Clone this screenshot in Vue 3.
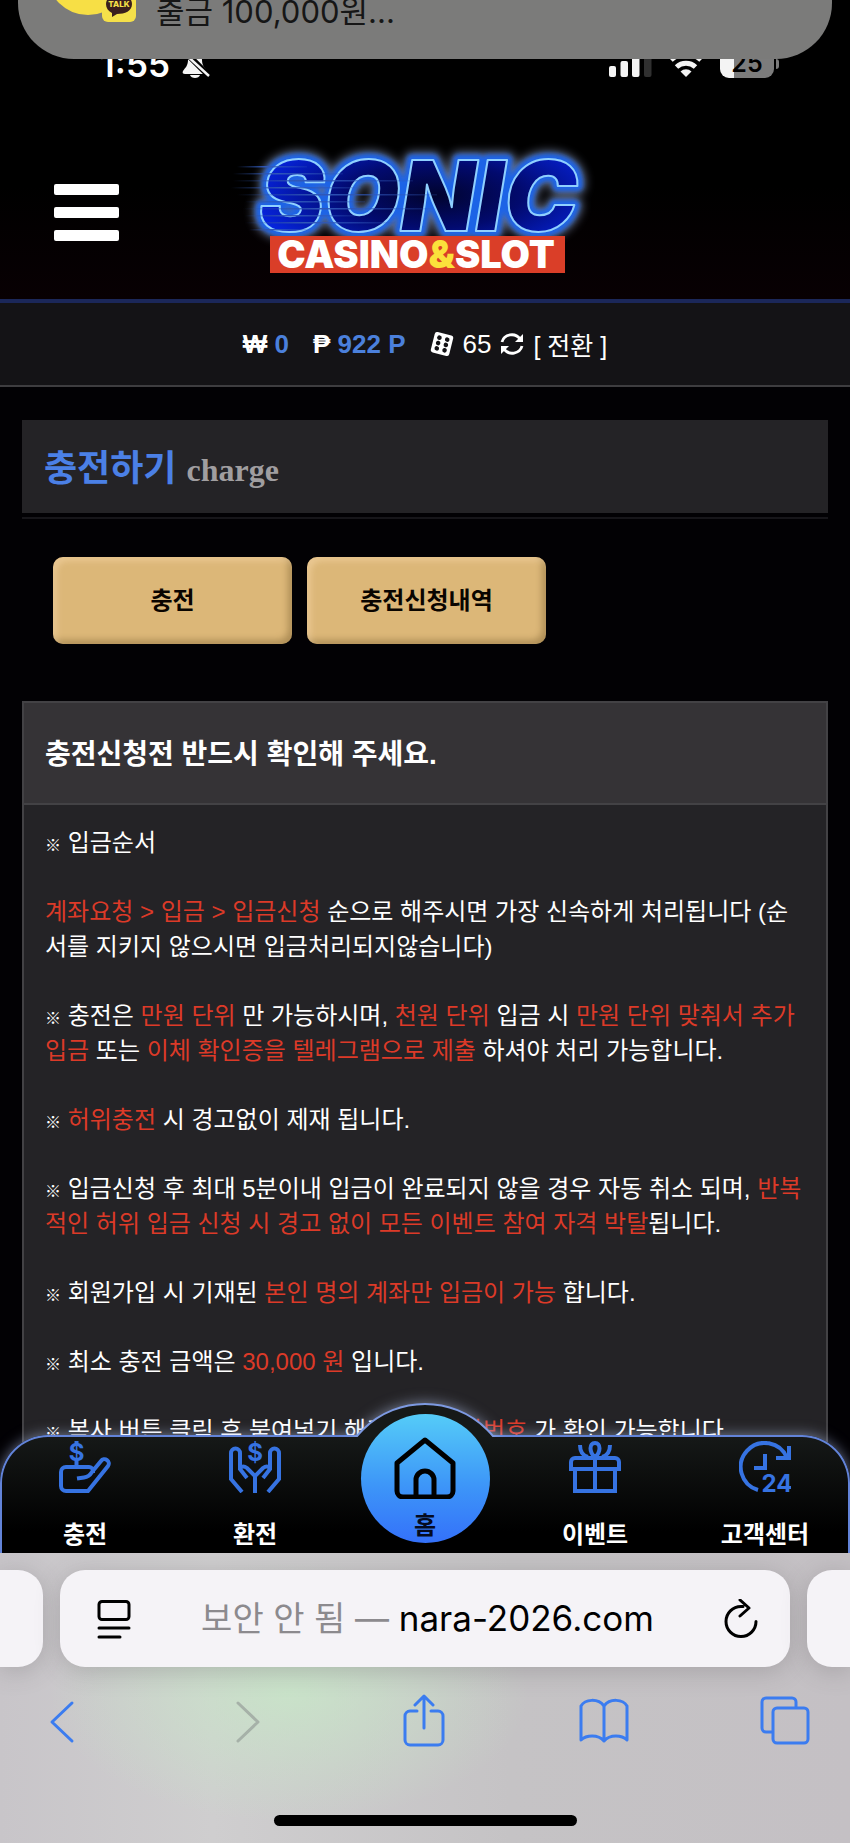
<template>
  <div class="phone">
    <div class="site">
      <div class="status-bar">
        <div class="status-left">
          <span class="clock">1:55</span>
          <svg class="bell" viewBox="0 0 30 30" aria-hidden="true">
            <path d="M15 2c-5 0-7 4-7 9 0 6-3 8-5 11-1 2 0 3 2 3h20c2 0 3-1 2-3-2-3-5-5-5-11 0-5-2-9-7-9z" fill="#f4f4f4" />
            <path d="M10 26h10c-1 4-9 4-10 0z" fill="#f4f4f4" />
            <path d="M2 0l27 27" stroke="#000" stroke-width="6" />
            <path d="M3 3l26 24" stroke="#f4f4f4" stroke-width="2.4" />
          </svg>
        </div>
        <div class="status-right">
          <svg class="signal" viewBox="0 0 43 26" aria-hidden="true">
            <rect x="0" y="15" width="7" height="11" rx="2" fill="#f4f4f4" />
            <rect x="11.500" y="10" width="7.500" height="16" rx="2" fill="#f4f4f4" />
            <rect x="23" y="5" width="7.500" height="21" rx="2" fill="#f4f4f4" />
            <rect x="35" y="0" width="7.500" height="26" rx="2" fill="#303030" />
          </svg>
          <svg class="wifi" viewBox="0 0 36 26" aria-hidden="true">
            <path d="M3 9a22 22 0 0 1 30 0" fill="none" stroke="#f4f4f4" stroke-width="5" />
            <path d="M8.500 16a14 14 0 0 1 19 0" fill="none" stroke="#f4f4f4" stroke-width="5" />
            <path d="M12.500 20.500a8 8 0 0 1 11 0L18 26z" fill="#f4f4f4" />
          </svg>
          <div class="battery"><span>25</span></div>
        </div>
      </div>

      <header class="site-header">
        <button class="menu-btn" type="button" aria-label="메뉴">
          <i></i><i></i><i></i>
        </button>
        <a href="#" class="logo" aria-label="SONIC CASINO&SLOT">
          <svg viewBox="0 0 400 145">
            <defs>
              <filter id="glow" x="-20%" y="-40%" width="140%" height="180%">
                <feGaussianBlur stdDeviation="5" />
              </filter>
              <filter id="soft" x="-20%" y="-40%" width="140%" height="180%">
                <feGaussianBlur stdDeviation="2" />
              </filter>
              <radialGradient id="fill" cx="0.55" cy="0.5" r="0.6">
                <stop offset="0" stop-color="#01042e" />
                <stop offset="0.45" stop-color="#020a6e" />
                <stop offset="1" stop-color="#0626e8" />
              </radialGradient>
              <linearGradient id="speed" x1="0" x2="1">
                <stop offset="0" stop-color="#2c4f9c" stop-opacity="0" />
                <stop offset="0.4" stop-color="#2f57b8" />
                <stop offset="1" stop-color="#2f57b8" stop-opacity="0.2" />
              </linearGradient>
            </defs>
            <g class="word">
              <text x="34" y="91" stroke="#8d9cc0" stroke-width="16" filter="url(#glow)" opacity="0.7">SONIC</text>
              <text x="34" y="91" stroke="#1f63e6" stroke-width="11" filter="url(#soft)">SONIC</text>
              <text x="34" y="91" fill="url(#fill)" stroke="#8fd0ff" stroke-width="2">SONIC</text>
            </g>
            <g fill="url(#speed)">
              <rect v-for="line in speedLines" :key="line.y" :x="line.x" :y="line.y" :width="line.w" height="1.500" />
            </g>
            <rect x="45" y="96" width="295" height="37" fill="#da3e28" />
            <text class="sub" x="191" y="128" text-anchor="middle">CASINO<tspan fill="#fbe13b">&amp;</tspan>SLOT</text>
          </svg>
        </a>
      </header>

      <div class="balance">
        <span class="money"><b>₩</b> <b class="num">0</b></span>
        <span class="money"><b>₱</b> <b class="num">922 P</b></span>
        <span class="ticket">
          <svg viewBox="0 0 24 24" class="dice" aria-hidden="true">
            <g transform="rotate(14 12 12)">
              <rect x="2.500" y="1.500" width="19" height="21" rx="2.500" fill="#fff" />
              <g fill="#141316">
                <circle cx="8" cy="6.500" r="2.300" /><circle cx="16" cy="6.500" r="2.300" />
                <circle cx="8" cy="12" r="2.300" /><circle cx="16" cy="12" r="2.300" />
                <circle cx="8" cy="17.500" r="2.300" /><circle cx="16" cy="17.500" r="2.300" />
              </g>
            </g>
          </svg>
          65
          <svg viewBox="0 0 24 24" class="refresh" aria-hidden="true">
            <path d="M2 10a10 9.500 0 0 1 18-3M22 14a10 9.500 0 0 1-18 3" fill="none" stroke="#fff" stroke-width="2.800" />
            <path d="M23 2v8h-8zM1 22v-8h8z" fill="#fff" />
          </svg>
          <a href="#" class="convert">[ 전환 ]</a>
        </span>
      </div>

      <main class="content">
        <h1 class="page-title">충전하기 <span>charge</span></h1>

        <div class="tabs">
          <button v-for="tab in tabs" :key="tab" type="button">{{ tab }}</button>
        </div>

        <section class="notice">
          <h2>충전신청전 반드시 확인해 주세요.</h2>
          <div class="notice-body">
            <p v-for="(parts, index) in notices" :key="index">
              <span v-for="(part, i) in parts" :key="i" :class="part.type">{{ part.text }}</span>
            </p>
          </div>
        </section>
      </main>

      <nav class="bottom-nav">
        <div class="bump"></div>
        <a href="#">
          <svg viewBox="0 0 52 52" class="nav-icon">
            <path d="M34 32v-2a4 4 0 0 0-4-4H7a5 5 0 0 0-5 5v14a5 5 0 0 0 5 5h22L49 25a4 4 0 0 0-7-5L33 31q-3 5-8 5.500l-7 1" />
            <path d="M17.500 0v4M17.500 18v7" />
            <text x="17.500" y="20" text-anchor="middle">$</text>
          </svg>
          <span>충전</span>
        </a>
        <a href="#">
          <svg viewBox="0 0 52 52" class="nav-icon">
            <path d="M13 51L2 38V12a4 4 0 0 1 9 0v16l7 9M11 27q3-3 7 0l8 8v17" />
            <path d="M39 51l11-13V12a4 4 0 0 0-9 0v16l-7 9M41 27q-3-3-7 0l-8 8" />
            <text x="26" y="20" text-anchor="middle">$</text>
          </svg>
          <span>환전</span>
        </a>
        <a href="#" class="home">
          <span class="home-disc">
            <svg viewBox="0 0 62 62">
              <path d="M3 26L31 3l28 23v28a6 6 0 0 1-6 6H9a6 6 0 0 1-6-6z" />
              <path d="M22 60V43a9 9 0 0 1 18 0v17" />
            </svg>
            <span>홈</span>
          </span>
        </a>
        <a href="#">
          <svg viewBox="0 0 52 52" class="nav-icon">
            <path d="M6 28h40v22H6zM2 28v-7a4 4 0 0 1 4-4h40a4 4 0 0 1 4 4v7zM26 17v33" />
            <path d="M26 16c-6-5-6-14 0-14s6 9 0 14M11 4q0 10 8 12M41 4q0 10-8 12" />
          </svg>
          <span>이벤트</span>
        </a>
        <a href="#">
          <svg viewBox="0 0 52 52" class="nav-icon">
            <path d="M19 49A24 24 0 1 1 48 17M50 5v12H37M26 13v14H15" />
            <text x="38" y="51" text-anchor="middle">24</text>
          </svg>
          <span>고객센터</span>
        </a>
      </nav>
    </div>

    <footer class="browser">
      <div class="address-row">
        <div class="peek peek-left"></div>
        <div class="address">
          <button type="button" aria-label="페이지 메뉴">
            <svg viewBox="0 0 34 40">
              <path d="M5 2.500h24a3 3 0 0 1 3 3v12a3 3 0 0 1-3 3H5a3 3 0 0 1-3-3v-12a3 3 0 0 1 3-3zM2 29h30M2 38h21" />
            </svg>
          </button>
          <button type="button" class="url"><span>보안 안 됨 —</span> nara-2026.com</button>
          <button type="button" aria-label="새로고침">
            <svg viewBox="0 0 34 40">
              <path d="M19 7.500h-2A15 15 0 1 0 32 22.500M16 1l9 8-9 8" />
            </svg>
          </button>
        </div>
        <div class="peek peek-right"></div>
      </div>
      <div class="toolbar">
        <button type="button" aria-label="뒤로">
          <svg viewBox="0 0 50 54"><path d="M35 9L15 28l20 19" /></svg>
        </button>
        <button type="button" aria-label="앞으로" disabled>
          <svg viewBox="0 0 50 54"><path d="M20 9l20 19-20 19" /></svg>
        </button>
        <button type="button" aria-label="공유">
          <svg viewBox="0 0 50 54"><path d="M18 17h-7a5 5 0 0 0-5 5v24a5 5 0 0 0 5 5h28a5 5 0 0 0 5-5V22a5 5 0 0 0-5-5h-7M25 34V3M16 11l9-9 9 9" /></svg>
        </button>
        <button type="button" aria-label="책갈피">
          <svg viewBox="0 0 50 54"><path d="M25 12C19 4 6 5 2 12v34c5-5 17-6 23 1 6-7 18-6 23-1V12C44 5 31 4 25 12zv35" /></svg>
        </button>
        <button type="button" aria-label="탭">
          <svg viewBox="0 0 50 54"><path d="M12 38H6a4 4 0 0 1-4-4V8a4 4 0 0 1 4-4h26a4 4 0 0 1 4 4v6M17 14h27a4 4 0 0 1 4 4v27a4 4 0 0 1-4 4H17a4 4 0 0 1-4-4V18a4 4 0 0 1 4-4z" /></svg>
        </button>
      </div>
      <div class="home-indicator"></div>
    </footer>

    <aside class="notification">
      <span class="avatar"></span>
      <svg class="kakao" viewBox="0 0 34 34" aria-hidden="true">
        <rect width="34" height="34" rx="6" fill="#f5e04a" />
        <path d="M17 6c-7 0-13 4-13 10 0 4 2 7 6 9v4l5-3c8 0 15-3 15-10 0-6-6-10-13-10z" fill="#3b1f1d" />
        <text x="17" y="19" text-anchor="middle">TALK</text>
      </svg>
      <p>출금 100,000원...</p>
    </aside>
  </div>
</template>

<script setup>
import { ref } from 'vue'

const tabs = ref(['충전', '충전신청내역'])

const mark = { text: '※', type: 'mark' }
const red = (text) => ({ text, type: 'red' })
const txt = (text) => ({ text, type: 'txt' })

const notices = ref([
  [mark, txt(' 입금순서')],
  [red('계좌요청 > 입금 > 입금신청'), txt(' 순으로 해주시면 가장 신속하게 처리됩니다 (순서를 지키지 않으시면 입금처리되지않습니다)')],
  [mark, txt(' 충전은 '), red('만원 단위'), txt(' 만 가능하시며, '), red('천원 단위'), txt(' 입금 시 '), red('만원 단위 맞춰서 추가입금'), txt(' 또는 '), red('이체 확인증을 텔레그램으로 제출'), txt(' 하셔야 처리 가능합니다.')],
  [mark, txt(' '), red('허위충전'), txt(' 시 경고없이 제재 됩니다.')],
  [mark, txt(' 입금신청 후 최대 5분이내 입금이 완료되지 않을 경우 자동 취소 되며, '), red('반복적인 허위 입금 신청 시 경고 없이 모든 이벤트 참여 자격 박탈'), txt('됩니다.')],
  [mark, txt(' 회원가입 시 기재된 '), red('본인 명의 계좌만 입금이 가능'), txt(' 합니다.')],
  [mark, txt(' 최소 충전 금액은 '), red('30,000 원'), txt(' 입니다.')],
  [mark, txt(' 복사 버튼 클릭 후 붙여넣기 해주시면 '), red('계좌번호'), txt(' 가 확인 가능합니다.')]
])

const speedLines = [
  { x: 12, y: 26, w: 70 },
  { x: 8, y: 33, w: 110 },
  { x: 8, y: 40, w: 180 },
  { x: 6, y: 47, w: 130 },
  { x: 12, y: 54, w: 200 },
  { x: 20, y: 61, w: 120 },
  { x: 18, y: 68, w: 190 },
  { x: 20, y: 75, w: 110 },
  { x: 20, y: 82, w: 150 },
  { x: 24, y: 89, w: 60 }
]
</script>

<style>
body {
  margin: 0;
  background: #000;
}
</style>

<style scoped>
.phone {
  position: relative;
  display: flex;
  flex-direction: column;
  height: 100vh;
  overflow: hidden;
  background: #020104;
  color: #fff;
  font-family: "Liberation Sans", "Noto Sans CJK KR", sans-serif;
  font-size: 24px;
}

button {
  padding: 0;
  border: 0;
  background: none;
  color: inherit;
  font: inherit;
}

a {
  color: inherit;
  text-decoration: none;
}

.site {
  position: relative;
  flex: 1;
  min-height: 0;
  overflow: hidden;
}

/* status bar */
.status-bar {
  display: flex;
  justify-content: space-between;
  height: 66px;
  padding: 44px 76px 0 100px;
  background: #000;
}

.status-left,
.status-right {
  display: flex;
  align-items: center;
  height: 40px;
}

.clock {
  font: 600 35px/40px Inter, sans-serif;
}

.bell {
  width: 30px;
  height: 30px;
  margin-left: 10px;
}

.signal {
  width: 43px;
  height: 26px;
}

.wifi {
  width: 36px;
  height: 26px;
  margin: 0 16px;
}

.battery {
  position: relative;
  width: 54px;
  height: 28px;
  border-radius: 9px;
  background: linear-gradient(90deg, #f4f4f4 14px, #7c7c7c 14px);
  color: #000;
  font: 600 25px/26px Inter, sans-serif;
  text-align: center;
}

.battery::after {
  content: "";
  position: absolute;
  top: 9px;
  right: -5px;
  width: 3px;
  height: 10px;
  border-radius: 0 3px 3px 0;
  background: #7c7c7c;
}

/* header */
.site-header {
  display: grid;
  grid-template-columns: 1fr 400px 1fr;
  align-items: center;
  padding: 30px 0 14px;
  border-bottom: 4px solid #1b2759;
  background: linear-gradient(#000 40%, #080003);
}

.menu-btn {
  display: flex;
  flex-direction: column;
  gap: 12px;
  width: 65px;
  margin-left: 54px;
}

.menu-btn i {
  height: 11px;
  border-radius: 2px;
  background: #fff;
}

.logo svg {
  display: block;
  width: 100%;
  overflow: visible;
}

.word {
  font: italic 900 98px Inter, sans-serif;
  stroke-linejoin: round;
}

.sub {
  fill: #fff;
  font: 900 38px Inter, sans-serif;
}

/* balance */
.balance {
  display: flex;
  justify-content: center;
  align-items: center;
  gap: 24px;
  height: 82px;
  border-bottom: 2px solid #3e3d40;
  background: #141316;
  font-size: 26px;
}

.num {
  color: #4b80dc;
}

.ticket {
  display: flex;
  align-items: center;
  gap: 9px;
}

.dice,
.refresh {
  width: 24px;
  height: 24px;
}

.convert {
  font-size: 25px;
}

/* content */
.content {
  padding: 33px 22px 0;
}

.page-title {
  position: relative;
  margin: 0;
  padding: 6px 22px 0;
  background: #242326;
  color: #4b80e6;
  font-size: 36px;
  line-height: 86px;
}

.page-title::after {
  content: "";
  position: absolute;
  top: 97px;
  left: 0;
  right: 0;
  height: 2px;
  background: #17161a;
}

.page-title span {
  color: #a09ea0;
  font-family: "Liberation Serif", serif;
  font-size: 32px;
}

.tabs {
  display: flex;
  gap: 15px;
  margin: 44px 31px 57px;
}

.tabs button {
  width: 239px;
  height: 87px;
  padding-bottom: 5px;
  border-radius: 10px;
  background: #dcb778;
  box-shadow: inset 4px 4px 6px rgba(255, 225, 185, 0.4), inset -4px -4px 6px rgba(110, 85, 40, 0.4);
  color: #0a0500;
  font-size: 24px;
  font-weight: 700;
}

.notice {
  border: 2px solid #434245;
  background: #242326;
}

.notice h2 {
  margin: 0;
  padding: 4px 21px 0;
  border-bottom: 2px solid #434245;
  background: #353336;
  font-size: 28px;
  line-height: 96px;
}

.notice-body {
  padding: 20px 21px 60px;
}

.notice-body p {
  margin: 0 0 34px;
  line-height: 35px;
}

.mark {
  font-size: 16px;
  font-weight: 700;
  line-height: 16px;
}

.red {
  color: #dc3a28;
}

/* bottom navigation */
.bottom-nav {
  position: absolute;
  left: 0;
  right: 0;
  bottom: -2px;
  display: grid;
  grid-template-columns: repeat(5, 1fr);
  height: 120px;
  border-radius: 48px 48px 0 0;
  background: linear-gradient(#161918, #000 80%);
  box-shadow: inset 0 0 0 2px #6283d8, 0 0 14px rgba(190, 205, 245, 0.55);
}

.bottom-nav a {
  display: flex;
  flex-direction: column;
  align-items: center;
  gap: 24px;
  padding-top: 6px;
  font-weight: 700;
  line-height: 36px;
}

.nav-icon {
  width: 52px;
  height: 52px;
  fill: none;
  stroke: #3673e2;
  stroke-width: 4;
}

.nav-icon text {
  fill: #3673e2;
  stroke: none;
  font: 700 24px Inter, sans-serif;
}

.bump {
  position: absolute;
  top: -32px;
  left: calc(50% - 89px);
  box-sizing: border-box;
  width: 178px;
  height: 178px;
  border: 2px solid #7d9ae2;
  border-radius: 50%;
  background: #161918;
  box-shadow: 0 0 14px rgba(190, 205, 245, 0.55);
  clip-path: inset(-20px -20px 144px -20px);
}

.bottom-nav .home {
  position: relative;
  padding: 0;
}

.home-disc {
  position: absolute;
  top: -21px;
  display: flex;
  flex-direction: column;
  align-items: center;
  box-sizing: border-box;
  width: 129px;
  height: 129px;
  padding-top: 23px;
  border-radius: 50%;
  background: linear-gradient(#55ccf8, #3d96f8 55%, #3471fa);
  color: #050b20;
  line-height: 54px;
}

.home-disc svg {
  flex: none;
  width: 62px;
  height: 62px;
  fill: none;
  stroke: #000;
  stroke-width: 5;
  stroke-linejoin: round;
}

/* browser controls */
.browser {
  flex: none;
  padding-top: 17px;
  background:
    radial-gradient(240px 130px at 34% 48%, rgba(200, 232, 200, 0.8), transparent),
    linear-gradient(90deg, #c8c5c9, #cfcecf 25%, #c5c3c5 60%, #c4c0c4);
}

.address-row {
  display: flex;
  gap: 17px;
}

.peek,
.address {
  height: 97px;
  border-radius: 25px;
  background: #f5f3f7;
  box-shadow: 0 4px 24px rgba(80, 75, 80, 0.25);
}

.peek {
  width: 43px;
}

.peek-left {
  border-radius: 0 25px 25px 0;
}

.peek-right {
  border-radius: 25px 0 0 25px;
}

.address {
  display: flex;
  flex: 1;
  align-items: center;
  justify-content: space-between;
  padding: 0 32px 0 37px;
  color: #000;
}

.address svg {
  display: block;
  width: 34px;
  height: 40px;
  fill: none;
  stroke: #000;
  stroke-width: 3;
  stroke-linecap: round;
  stroke-linejoin: round;
}

.url {
  font: 35px/44px Inter, "Noto Sans CJK KR", sans-serif;
}

.url span {
  color: #8c8a8e;
  font-size: 34px;
}

.toolbar {
  display: flex;
  justify-content: space-between;
  padding: 27px 40px 0 37px;
}

.toolbar svg {
  display: block;
  width: 50px;
  height: 54px;
  fill: none;
  stroke: #3b7cf0;
  stroke-width: 3;
  stroke-linecap: round;
  stroke-linejoin: round;
}

.toolbar button:disabled svg {
  stroke: #a6b1a8;
}

.home-indicator {
  width: 303px;
  height: 11px;
  margin: 67px auto 17px;
  border-radius: 6px;
  background: #000;
}

/* notification banner sliding off the top */
.notification {
  position: absolute;
  top: 0;
  left: 18px;
  right: 18px;
  height: 59px;
  overflow: hidden;
  border-radius: 0 0 56px 56px;
  background: #7b7b7a;
  color: #161616;
}

.avatar {
  position: absolute;
  top: -67px;
  left: 29px;
  width: 82px;
  height: 82px;
  border-radius: 50%;
  background: #f7df45;
}

.kakao {
  position: absolute;
  top: -12px;
  left: 84px;
  width: 34px;
  height: 34px;
}

.kakao text {
  fill: #f5e04a;
  font: 800 8px Inter, sans-serif;
}

.notification p {
  margin: 0;
  padding-left: 138px;
  font: 31px/24px Inter, "Noto Sans CJK KR", sans-serif;
}
</style>
